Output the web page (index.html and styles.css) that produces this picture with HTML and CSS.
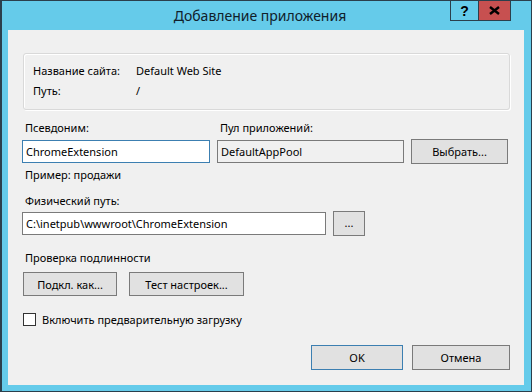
FILE: index.html
```html
<!DOCTYPE html>
<html lang="ru">
<head>
    <meta charset="UTF-8">
    <title>Добавление приложения</title>
    <link rel="stylesheet" href="styles.css">
</head>
<body>

<div class="window">
    <div class="titlebar">
        <div class="title">Добавление приложения</div>
        <div class="caption-buttons">
            <div class="cap-btn help">?</div>
            <div class="cap-btn close">
                <svg width="11" height="9" viewBox="0 0 11 9">
                    <path d="M1 1 L10 8 M10 1 L1 8" stroke="#000" stroke-width="2.4" fill="none"/>
                </svg>
            </div>
        </div>
    </div>

    <div class="client">
        <div class="groupbox">
            <div class="info-row"><span class="info-label">Название сайта:</span><span>Default Web Site</span></div>
            <div class="info-row"><span class="info-label">Путь:</span><span>/</span></div>
        </div>

        <div class="form">
            <div class="alias-grid">
                <div class="label">Псевдоним:</div>
                <div class="label">Пул приложений:</div>
                <div></div>
                <div class="textbox focused">ChromeExtension</div>
                <div class="textbox readonly">DefaultAppPool</div>
                <div class="button">Выбрать...</div>
                <div class="label hint">Пример: продажи</div>
            </div>

            <div class="label section-gap">Физический путь:</div>
            <div class="path-row">
                <div class="textbox path">C:\inetpub\wwwroot\ChromeExtension</div>
                <div class="button browse">...</div>
            </div>

            <div class="label auth-label">Проверка подлинности</div>
            <div class="auth-row">
                <div class="button connect">Подкл. как...</div>
                <div class="button test">Тест настроек...</div>
            </div>

            <div class="check-row">
                <span class="checkbox"></span>
                <span>Включить предварительную загрузку</span>
            </div>
        </div>

        <div class="footer">
            <div class="button ok">OK</div>
            <div class="button cancel">Отмена</div>
        </div>
    </div>
</div>

</body>
</html>
```

FILE: styles.css
```css
body {
    margin: 0;
    padding: 0;
    background-color: #ffffff;
    font-family: "Noto Sans", "Open Sans", sans-serif;
    font-size: 11px;
    color: #000;
}

.window {
    width: 532px;
    height: 392px;
    box-sizing: border-box;
    border: 1px solid #2b3f4c;
    border-left-width: 2px;
    background-color: #65cbea;
    display: flex;
    flex-direction: column;
}

.titlebar {
    height: 29px;
    display: flex;
    align-items: flex-start;
}

.title {
    flex: 1;
    text-align: center;
    padding-left: 68px;
    font-size: 14px;
    line-height: 29px;
    color: #10202a;
}

.caption-buttons {
    display: flex;
    margin-right: 20px;
    border: 1px solid #2b3f4c;
    border-top: none;
}

.cap-btn {
    height: 19px;
    display: flex;
    align-items: center;
    justify-content: center;
}

.help {
    width: 27px;
    border-right: 1px solid #2b3f4c;
    font-family: "Liberation Sans", Arial, sans-serif;
    font-weight: bold;
    font-size: 14px;
    color: #000;
}

.close {
    width: 31px;
    background-color: #c75050;
}

.client {
    flex: 1;
    margin: 0 7px 6px 6px;
    background-color: #f0f0f0;
    padding: 0 14px;
    display: flex;
    flex-direction: column;
}

.groupbox {
    box-sizing: border-box;
    margin-top: 23px;
    margin-left: 1px;
    height: 57px;
    border: 1px solid #d9d9d9;
    border-radius: 3px;
    box-shadow: inset 1px 1px 0 #fff, 1px 1px 0 #fff;
    padding: 7px 9px 0;
}

.info-row {
    display: flex;
    line-height: 20px;
}

.info-label {
    width: 103px;
}

.form {
    display: flex;
    flex-direction: column;
}

.label {
    line-height: 18px;
    padding-left: 3px;
}

.alias-grid {
    margin-top: 9px;
    display: grid;
    grid-template-columns: 188px 187px 97px;
    grid-template-rows: 18px 25px 18px;
    column-gap: 7px;
    row-gap: 2px;
    align-items: center;
}

.textbox {
    height: 23px;
    box-sizing: border-box;
    border: 1px solid #7a7a7a;
    background-color: #fff;
    line-height: 21px;
    padding-left: 3px;
    white-space: nowrap;
    overflow: hidden;
}

.textbox.focused {
    border-color: #3c7fb1;
}

.textbox.readonly {
    background-color: #f0f0f0;
}

.button {
    box-sizing: border-box;
    height: 25px;
    border: 1px solid #7a7a7a;
    background-color: #e1e1e1;
    display: flex;
    align-items: center;
    justify-content: center;
}

.section-gap {
    margin-top: 8px;
}

.path-row {
    margin-top: 1px;
    display: flex;
    align-items: center;
    gap: 7px;
}

.textbox.path {
    width: 304px;
}

.browse {
    width: 32px;
    padding-bottom: 3px;
}

.auth-label {
    margin-top: 13px;
}

.auth-row {
    margin-top: 5px;
    display: flex;
    gap: 12px;
    padding-left: 1px;
}

.auth-row .button {
    height: 24px;
}

.connect {
    width: 94px;
}

.test {
    width: 115px;
}

.check-row {
    margin-top: 14px;
    display: flex;
    align-items: center;
    height: 18px;
    padding-left: 1px;
}

.checkbox {
    width: 13px;
    height: 13px;
    box-sizing: border-box;
    border: 1px solid #333;
    background-color: #fff;
    margin-right: 6px;
}

.footer {
    margin-top: 17px;
    display: flex;
    justify-content: flex-end;
    gap: 9px;
}

.ok {
    width: 92px;
    border-color: #3c7fb1;
}

.cancel {
    width: 98px;
}
```
